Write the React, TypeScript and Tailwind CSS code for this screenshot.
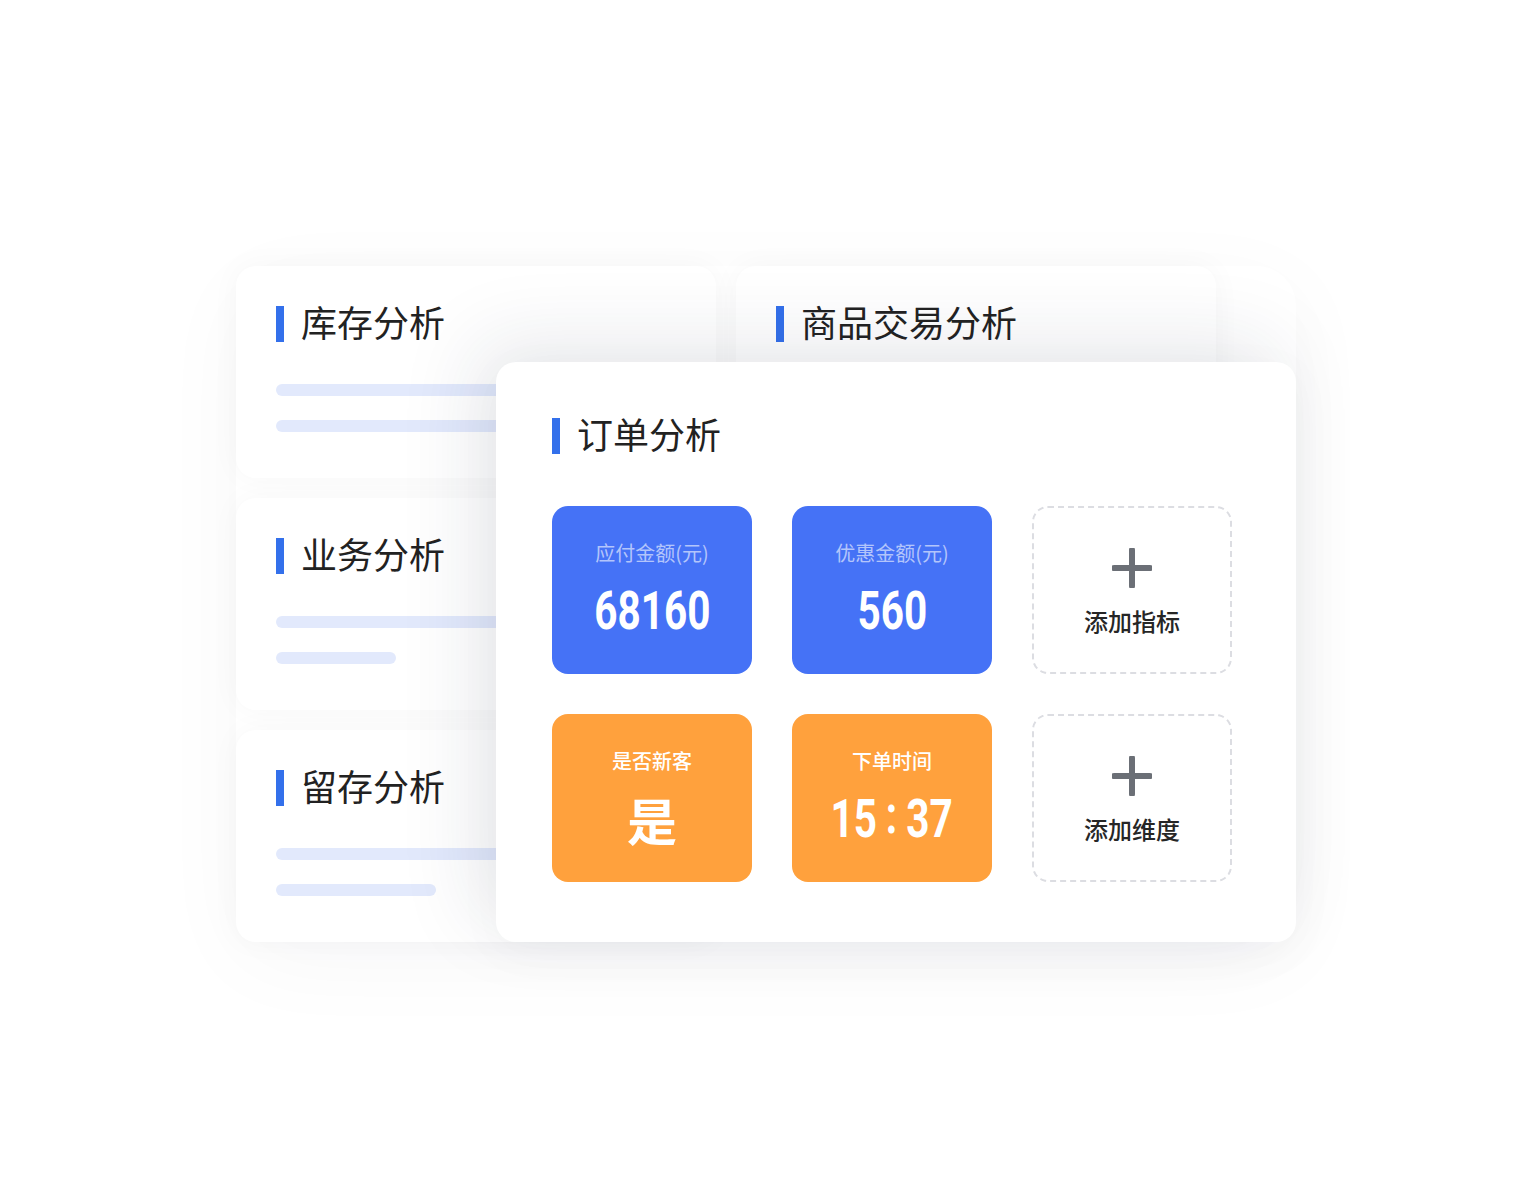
import React from "react";

const CJK = "font-['Noto_Sans_CJK_SC','Noto_Sans',sans-serif]";

function Title({ text }: { text: string }) {
  return (
    <div className="flex items-center h-9">
      <div className="w-2 h-9 bg-[#3370eb]" />
      <div className={`ml-[17px] -translate-y-[3px] text-[36px] leading-9 font-normal text-[#222222] ${CJK}`}>{text}</div>
    </div>
  );
}

function SideCard({ title, short, className }: { title: string; short: number; className: string }) {
  return (
    <div className={`bg-white rounded-[20px] shadow-[0_0_30px_rgba(30,40,70,0.035)] px-10 pt-10 ${className}`}>
      <Title text={title} />
      <div className="mt-[42px] flex flex-col gap-6">
        <div className="h-3 w-[400px] rounded-full bg-[#e2e9fc]" />
        <div className="h-3 rounded-full bg-[#e2e9fc]" style={{ width: short }} />
      </div>
    </div>
  );
}

function Num({ children }: { children: React.ReactNode }) {
  return (
    <div className="h-[60px] flex items-center justify-center">
      <div className="text-[54px] leading-[60px] font-bold text-white font-['Roboto',sans-serif] scale-x-[0.75] whitespace-nowrap flex items-center">
        {children}
      </div>
    </div>
  );
}

function StatTile({ label, color, labelClass, children }: { label: string; color: string; labelClass: string; children: React.ReactNode }) {
  return (
    <div className={`rounded-2xl flex flex-col items-center justify-center ${color}`}>
      <div className={`text-[20px] leading-7 ${labelClass} ${CJK}`}>{label}</div>
      <div className="mt-[14px]">{children}</div>
    </div>
  );
}

function AddTile({ label }: { label: string }) {
  return (
    <div className="rounded-2xl border-2 border-dashed border-[#dcdde2] flex flex-col items-center justify-center">
      <svg width="40" height="40" viewBox="0 0 40 40" className="mt-[5px]">
        <path d="M20 2 V38 M2 20 H38" stroke="#6b6f76" strokeWidth="6" strokeLinecap="round" fill="none" />
      </svg>
      <div className={`mt-[17px] text-[24px] leading-8 font-medium text-[#262626] ${CJK}`}>{label}</div>
    </div>
  );
}

export default function App() {
  return (
    <div className="w-[1532px] h-[1200px] bg-white overflow-hidden pl-[236px] pt-[266px]">
      <div className="w-[1060px] rounded-[40px] shadow-[0_20px_90px_rgba(20,30,60,0.035)] grid grid-cols-[260px_220px_20px_480px_80px] grid-rows-[96px_116px_20px_212px_20px_212px]">
        <SideCard title="库存分析" short={400} className="col-start-1 col-span-2 row-start-1 row-span-2" />
        <div className="col-start-4 col-span-1 row-start-1 row-span-2 bg-white rounded-[20px] shadow-[0_0_30px_rgba(30,40,70,0.035)] px-10 pt-10">
          <Title text="商品交易分析" />
        </div>
        <SideCard title="业务分析" short={120} className="col-start-1 col-span-2 row-start-4 row-span-1" />
        <SideCard title="留存分析" short={160} className="col-start-1 col-span-2 row-start-6 row-span-1" />

        <div className="relative z-10 col-start-2 col-span-4 row-start-2 row-span-5 bg-white rounded-[20px] shadow-[-20px_-20px_80px_rgba(30,40,70,0.10),0_10px_50px_rgba(30,40,70,0.03)] pl-14 pt-14">
          <Title text="订单分析" />
          <div className="mt-[52px] grid grid-cols-[200px_200px_200px] grid-rows-[168px_168px] gap-10">
            <StatTile label="应付金额(元)" color="bg-[#4572f6]" labelClass="text-white/60">
              <Num>68160</Num>
            </StatTile>
            <StatTile label="优惠金额(元)" color="bg-[#4572f6]" labelClass="text-white/60">
              <Num>560</Num>
            </StatTile>
            <AddTile label="添加指标" />
            <StatTile label="是否新客" color="bg-[#ffa13d]" labelClass="text-white font-medium">
              <div className={`h-[60px] flex items-center justify-center text-[50px] leading-[60px] font-bold text-white ${CJK}`}>是</div>
            </StatTile>
            <StatTile label="下单时间" color="bg-[#ffa13d]" labelClass="text-white font-medium">
              <Num>
                <span>15</span>
                <span className="mx-[12px] -translate-y-[4px] inline-block">:</span>
                <span>37</span>
              </Num>
            </StatTile>
            <AddTile label="添加维度" />
          </div>
        </div>
      </div>
    </div>
  );
}
